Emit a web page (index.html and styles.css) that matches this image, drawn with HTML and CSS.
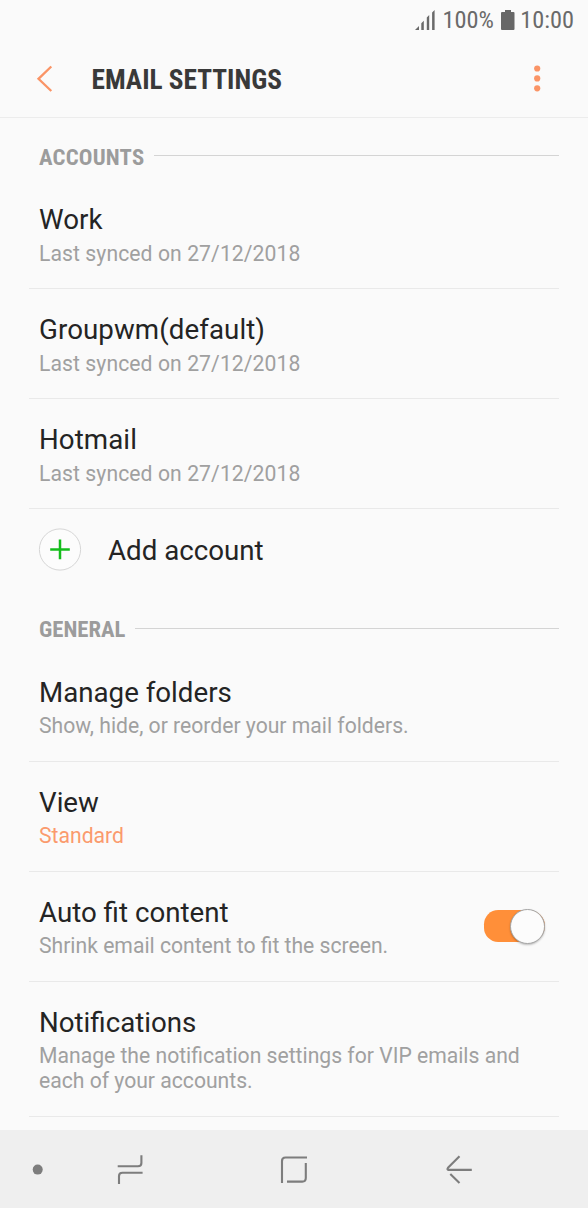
FILE: index.html
```
<!DOCTYPE html>
<html lang="en">
<head>
<meta charset="utf-8">
<title>Email settings</title>
<link rel="stylesheet" href="styles.css">
</head>
<body>
<div class="screen">
  <div class="status">
    <svg class="signal" width="20" height="20" viewBox="0 0 20 20"><path d="M0 20L4 16V20Z M6.3 13.2L8.8 10.8V20H6.3Z M11.8 7.5L14.2 5V20H11.8Z M17.1 2.6L19.6 0V20H17.1Z" fill="#6a6a6a"/></svg>
    <span class="battery-text">100%</span>
    <svg class="battery" width="14" height="20" viewBox="0 0 14 20"><path d="M4 0H10V2H12.5Q13.5 2 13.5 3V19Q13.5 20 12.5 20H1Q0 20 0 19V3Q0 2 1 2H4Z" fill="#676767"/></svg>
    <span class="clock">10:00</span>
  </div>
  <header class="bar">
    <svg class="back" width="18" height="28" viewBox="0 0 18 28"><path d="M16.3 1.5L3.5 13.8L16.3 26" fill="none" stroke="#fa9466" stroke-width="2.3"/></svg>
    <h1 class="title">EMAIL SETTINGS</h1>
    <svg class="more" width="8" height="28" viewBox="0 0 8 28"><g fill="#fa9466"><circle cx="4.2" cy="3.5" r="3.1"/><circle cx="4.2" cy="13.4" r="3.1"/><circle cx="4.2" cy="23.3" r="3.1"/></g></svg>
  </header>
  <main class="list">
    <div class="section"><h2 class="section-name accounts">ACCOUNTS</h2><i class="rule"></i></div>
    <div class="row account"><div class="name">Work</div><div class="detail date">Last synced on 27/12/2018</div></div>
    <div class="row account"><div class="name">Groupwm(default)</div><div class="detail date">Last synced on 27/12/2018</div></div>
    <div class="row account"><div class="name">Hotmail</div><div class="detail date">Last synced on 27/12/2018</div></div>
    <div class="add">
      <svg width="44" height="44" viewBox="0 0 44 44"><circle cx="22" cy="21.5" r="20.6" fill="#fcfcfc" stroke="#d6d6d6"/><path d="M12.2 21.4H31.8M22 11.6V31.2" stroke="#14bd1b" stroke-width="2.5"/></svg>
      <span class="name">Add account</span>
    </div>
    <div class="section"><h2 class="section-name">GENERAL</h2><i class="rule"></i></div>
    <div class="row"><div class="name">Manage folders</div><div class="detail">Show, hide, or reorder your mail folders.</div></div>
    <div class="row"><div class="name">View</div><div class="detail accent">Standard</div></div>
    <div class="row with-switch">
      <div><div class="name">Auto fit content</div><div class="detail">Shrink email content to fit the screen.</div></div>
      <div class="switch"><div class="knob"></div></div>
    </div>
    <div class="row tall"><div class="name">Notifications</div><div class="detail">Manage the notification settings for VIP emails and<br>each of your accounts.</div></div>
  </main>
  <nav class="nav">
    <svg width="588" height="78" viewBox="0 0 588 78" fill="none" stroke="#7d7d7d" stroke-width="2.1">
      <circle cx="37.7" cy="39.6" r="5" fill="#7d7d7d" stroke="none"/>
      <path d="M117.7 36.3H138Q141.4 36.3 141.4 33V25.2M119 54V46Q119 42.7 122.5 42.7H142.6"/>
      <path d="M282 53V31Q282 27.5 285.5 27.5H307M305.8 33V48Q305.8 51.6 302.3 51.6H287"/>
      <path d="M471.8 39.9H448.5Q446.7 39.6 448 37.8L459.5 26.3M450.3 44L459.5 53"/>
    </svg>
  </nav>
</div>
</body>
</html>
```
FILE: styles.css
```
body { margin: 0; background: #fafafa; font-family: Roboto, "Liberation Sans", sans-serif; }
.screen { width: 588px; height: 1208px; display: flex; flex-direction: column; overflow: hidden; }
.status { height: 40px; box-sizing: border-box; padding-right: 14px; display: flex; align-items: center; justify-content: flex-end; color: #6a6a6a; font-size: 24.3px; line-height: 28px; font-family: "Roboto Condensed", Roboto, sans-serif; font-stretch: 75%; }
.status span { padding-bottom: 1px; }
.battery-text { margin: 0 7px; }
.clock { margin-left: 5.5px; }
.bar { height: 78px; box-sizing: border-box; border-bottom: 1px solid #ececec; padding: 0 47px 0 35px; display: flex; align-items: center; }
.title { margin: 0 auto 0 38.5px; padding-top: 2px; font: bold 27.3px "Roboto Condensed", Roboto, sans-serif; font-stretch: 75%; color: #393939; white-space: nowrap; }
.list { flex: 1; padding: 0 29px; }
.section { height: 61px; box-sizing: border-box; padding: 15px 0 0 10px; display: flex; align-items: center; gap: 10px; }
.section-name { margin: 0; padding-top: 1px; font: bold 22.7px "Roboto Condensed", Roboto, sans-serif; font-stretch: 75%; color: #9c9c9c; white-space: nowrap; }
.accounts { padding-top: 2px; letter-spacing: 0.2px; }
.rule { flex: 1; height: 1.5px; margin-top: -1px; background: #d4d4d4; }
.row { height: 110px; box-sizing: border-box; border-bottom: 1px solid #e9e9e9; padding: 25px 10px 0; }
.name { font-size: 27.7px; line-height: 32px; color: #242424; white-space: nowrap; }
.account .name { letter-spacing: 0.08px; }
.detail { margin-top: 5px; font-size: 21.15px; line-height: 24.6px; color: #a0a0a0; white-space: nowrap; }
.account .detail { margin-top: 5.5px; }
.date { letter-spacing: 0.08px; }
.accent { color: #fa9a6d; }
.tall { height: 135px; }
.add { height: 82px; padding-left: 9px; display: flex; align-items: center; gap: 26px; }
.add .name { padding-top: 1px; }
.with-switch { display: flex; justify-content: space-between; align-items: flex-start; }
.switch { width: 61px; height: 32px; margin: 13px 4px 0 0; display: flex; justify-content: flex-end; align-items: center; background: #ff8f39; border-radius: 16px 18px 18px 16px; }
.knob { width: 33px; height: 33px; flex: none; border-radius: 50%; background: #fcfcfc; border: 1px solid #a5a5a5; box-shadow: 0 1px 2px rgba(0, 0, 0, 0.25); }
.nav { height: 78px; background: #efefef; }
```
